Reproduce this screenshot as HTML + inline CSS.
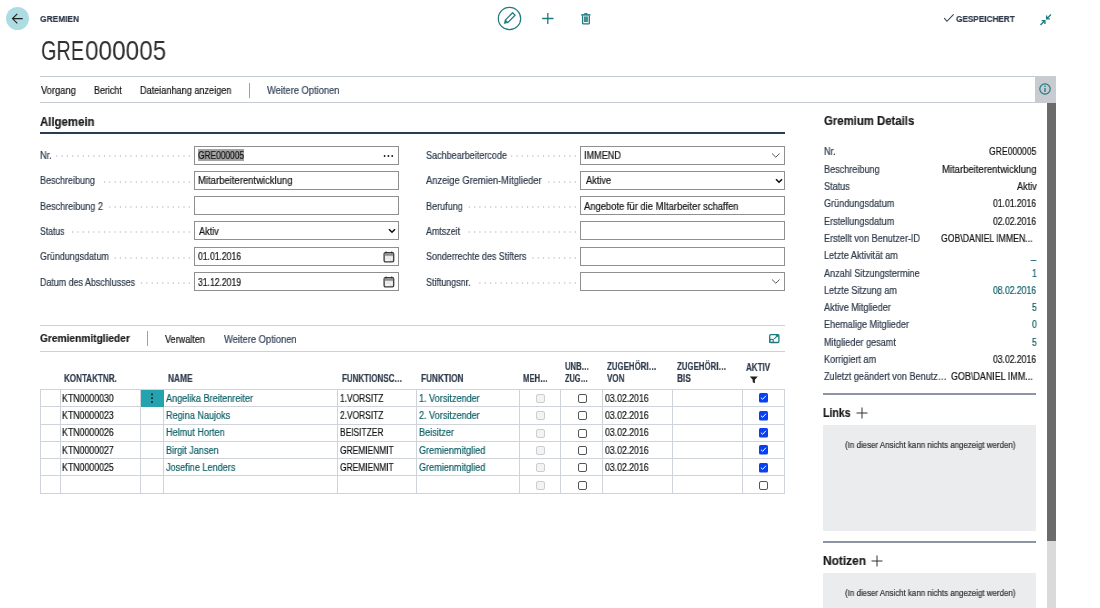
<!DOCTYPE html><html><head><meta charset="utf-8"><style>
*{margin:0;padding:0;box-sizing:border-box}
html,body{width:1100px;height:608px;overflow:hidden;background:#fff}
body{font-family:"Liberation Sans",sans-serif;color:#212121;position:relative}
.a{position:absolute;white-space:nowrap}
.t{position:absolute;white-space:nowrap;transform-origin:0 0;will-change:transform;-webkit-text-stroke:0.2px currentColor}
.inp{position:absolute;height:19px;border:1px solid #8f8f8f;background:#fff}
.dots{position:absolute;height:1.5px;background-image:linear-gradient(to right,transparent 4px,#c6cad0 4px);background-size:5.3px 1.5px;background-position:right top}
.vl{position:absolute;width:1px;background:#cfd3da}
.cb{position:absolute;width:9px;height:9px;border:1.2px solid #555;border-radius:2px;background:#fff}
.cbd{position:absolute;width:9px;height:9px;border:1px solid #cdcdcd;border-radius:2px;background:#f3f3f3}
.gbox{position:absolute;background:#ebecee}
</style></head><body>
<div class="a" style="left:6px;top:7px;width:23px;height:23px;border-radius:50%;background:#addde2"></div>
<svg class="a" style="left:6px;top:7px" width="23" height="23" viewBox="0 0 23 23"><path d="M6.5 11.6H16.7M11.3 6.8L6.5 11.6L11.3 16.4" fill="none" stroke="#1f1f1f" stroke-width="1.1"/></svg>
<div class="t" style="left:40.00px;top:13px;font-size:9.9px;line-height:11px;color:#2f3b4c;font-weight:bold;transform:scaleX(0.8483);">GREMIEN</div>
<div class="t" style="left:40.90px;top:35px;font-size:27.6px;line-height:31px;color:#303030;transform:scaleX(0.7191);-webkit-text-stroke:0;">GRE</div>
<div class="t" style="left:85.30px;top:35px;font-size:27.6px;line-height:31px;color:#303030;transform:scaleX(0.8819);-webkit-text-stroke:0;">000005</div>
<svg class="a" style="left:497px;top:6px" width="26" height="26" viewBox="0 0 26 26"><circle cx="12.5" cy="12.5" r="11.2" fill="none" stroke="#1d7a80" stroke-width="1.2"/><path d="M10.70 16.57L18.05 9.22L15.58 6.75L8.23 14.10Z" fill="none" stroke="#1d7a80" stroke-width="1.25" stroke-linejoin="round"/><path d="M7.20 17.60L10.70 16.57L8.23 14.10Z" fill="#1d7a80" stroke="#1d7a80" stroke-width="0.6" stroke-linejoin="round"/></svg>
<svg class="a" style="left:541px;top:12px" width="14" height="14" viewBox="0 0 14 14"><path d="M6.8 1V12M1.2 6.5H12.5" stroke="#1d7a80" stroke-width="1.3"/></svg>
<svg class="a" style="left:580px;top:11px" width="13" height="15" viewBox="0 0 13 15"><path d="M1.2 3.9H10.4" stroke="#1d7a80" stroke-width="1.5"/><path d="M3.9 3.5Q3.9 2.1 5.6 2.1H6.1Q7.7 2.1 7.7 3.5Z" fill="#1d7a80"/><path d="M2.6 4.4V12.2Q2.6 12.9 3.3 12.9H8.6Q9.3 12.9 9.3 12.2V4.4" fill="none" stroke="#1d7a80" stroke-width="1.3"/><rect x="4" y="5.4" width="3.9" height="5.6" fill="#1d7a80" fill-opacity="0.85"/></svg>
<svg class="a" style="left:943px;top:13px" width="12" height="10" viewBox="0 0 12 10"><path d="M1.2 5.2L4 8.3L10.6 1.4" fill="none" stroke="#3a4452" stroke-width="1.1"/></svg>
<div class="t" style="left:956.00px;top:13px;font-size:9.9px;line-height:11px;color:#2f3b4c;font-weight:bold;transform:scaleX(0.8305);">GESPEICHERT</div>
<svg class="a" style="left:1038px;top:12px" width="16" height="16" viewBox="0 0 16 16"><path d="M13 2.5L9 6.5M8.6 3.6V6.9H11.9" fill="none" stroke="#1d7a80" stroke-width="1.3"/><path d="M2.5 13L6.5 9M3.6 8.6H6.9V11.9" fill="none" stroke="#1d7a80" stroke-width="1.3"/></svg>
<div class="a" style="left:40px;top:76px;width:1016px;height:1px;background:#c6cbd3"></div>
<div class="a" style="left:40px;top:102px;width:995px;height:1px;background:#c6cbd3"></div>
<div class="t" style="left:40.70px;top:85px;font-size:10.0px;line-height:11px;color:#141414;transform:scaleX(0.9338);">Vorgang</div>
<div class="t" style="left:93.70px;top:85px;font-size:10.0px;line-height:11px;color:#141414;transform:scaleX(0.8932);">Bericht</div>
<div class="t" style="left:140.00px;top:85px;font-size:10.0px;line-height:11px;color:#141414;transform:scaleX(0.9131);">Dateianhang anzeigen</div>
<div class="a" style="left:249px;top:82.5px;width:1px;height:15px;background:#9aa1ab"></div>
<div class="t" style="left:267.00px;top:85px;font-size:10.0px;line-height:11px;color:#34425a;transform:scaleX(0.9325);">Weitere Optionen</div>
<div class="a" style="left:1035px;top:76px;width:21px;height:27px;background:#c8ccd1"></div>
<svg class="a" style="left:1038px;top:82px" width="14" height="14" viewBox="0 0 14 14"><circle cx="7" cy="7" r="5.2" fill="none" stroke="#1d7a80" stroke-width="1.2"/><path d="M7 6V10" stroke="#1d7a80" stroke-width="1.3"/><circle cx="7" cy="4.3" r="0.8" fill="#1d7a80"/></svg>
<div class="a" style="left:1047px;top:103px;width:9px;height:438px;background:#6b6b6b"></div>
<div class="a" style="left:1047px;top:541px;width:9px;height:67px;background:#dadada"></div>
<div class="t" style="left:40.20px;top:115px;font-size:12.2px;line-height:14px;color:#1c1c1c;font-weight:bold;transform:scaleX(0.9356);">Allgemein</div>
<div class="a" style="left:40px;top:132px;width:745px;height:2px;background:#2c3b52"></div>
<svg class="a" style="left:40px;top:154.30px" width="152" height="4" fill="#b9bec6"><circle cx="149.30" cy="2" r="0.75"/><circle cx="144.00" cy="2" r="0.75"/><circle cx="138.70" cy="2" r="0.75"/><circle cx="133.40" cy="2" r="0.75"/><circle cx="128.10" cy="2" r="0.75"/><circle cx="122.80" cy="2" r="0.75"/><circle cx="117.50" cy="2" r="0.75"/><circle cx="112.20" cy="2" r="0.75"/><circle cx="106.90" cy="2" r="0.75"/><circle cx="101.60" cy="2" r="0.75"/><circle cx="96.30" cy="2" r="0.75"/><circle cx="91.00" cy="2" r="0.75"/><circle cx="85.70" cy="2" r="0.75"/><circle cx="80.40" cy="2" r="0.75"/><circle cx="75.10" cy="2" r="0.75"/><circle cx="69.80" cy="2" r="0.75"/><circle cx="64.50" cy="2" r="0.75"/><circle cx="59.20" cy="2" r="0.75"/><circle cx="53.90" cy="2" r="0.75"/><circle cx="48.60" cy="2" r="0.75"/><circle cx="43.30" cy="2" r="0.75"/><circle cx="38.00" cy="2" r="0.75"/><circle cx="32.70" cy="2" r="0.75"/><circle cx="27.40" cy="2" r="0.75"/><circle cx="22.10" cy="2" r="0.75"/><circle cx="16.80" cy="2" r="0.75"/></svg>
<div class="t" style="left:40.00px;top:150px;font-size:10.0px;line-height:11px;color:#2e3a4a;transform:scaleX(0.9232);">Nr.</div>
<svg class="a" style="left:40px;top:179.70px" width="152" height="4" fill="#b9bec6"><circle cx="149.30" cy="2" r="0.75"/><circle cx="144.00" cy="2" r="0.75"/><circle cx="138.70" cy="2" r="0.75"/><circle cx="133.40" cy="2" r="0.75"/><circle cx="128.10" cy="2" r="0.75"/><circle cx="122.80" cy="2" r="0.75"/><circle cx="117.50" cy="2" r="0.75"/><circle cx="112.20" cy="2" r="0.75"/><circle cx="106.90" cy="2" r="0.75"/><circle cx="101.60" cy="2" r="0.75"/><circle cx="96.30" cy="2" r="0.75"/><circle cx="91.00" cy="2" r="0.75"/><circle cx="85.70" cy="2" r="0.75"/><circle cx="80.40" cy="2" r="0.75"/><circle cx="75.10" cy="2" r="0.75"/><circle cx="69.80" cy="2" r="0.75"/><circle cx="64.50" cy="2" r="0.75"/></svg>
<div class="t" style="left:40.00px;top:175px;font-size:10.0px;line-height:11px;color:#2e3a4a;transform:scaleX(0.8993);">Beschreibung</div>
<svg class="a" style="left:40px;top:205.00px" width="152" height="4" fill="#b9bec6"><circle cx="149.30" cy="2" r="0.75"/><circle cx="144.00" cy="2" r="0.75"/><circle cx="138.70" cy="2" r="0.75"/><circle cx="133.40" cy="2" r="0.75"/><circle cx="128.10" cy="2" r="0.75"/><circle cx="122.80" cy="2" r="0.75"/><circle cx="117.50" cy="2" r="0.75"/><circle cx="112.20" cy="2" r="0.75"/><circle cx="106.90" cy="2" r="0.75"/><circle cx="101.60" cy="2" r="0.75"/><circle cx="96.30" cy="2" r="0.75"/><circle cx="91.00" cy="2" r="0.75"/><circle cx="85.70" cy="2" r="0.75"/><circle cx="80.40" cy="2" r="0.75"/><circle cx="75.10" cy="2" r="0.75"/><circle cx="69.80" cy="2" r="0.75"/></svg>
<div class="t" style="left:40.00px;top:201px;font-size:10.0px;line-height:11px;color:#2e3a4a;transform:scaleX(0.9050);">Beschreibung 2</div>
<svg class="a" style="left:40px;top:230.00px" width="152" height="4" fill="#b9bec6"><circle cx="149.30" cy="2" r="0.75"/><circle cx="144.00" cy="2" r="0.75"/><circle cx="138.70" cy="2" r="0.75"/><circle cx="133.40" cy="2" r="0.75"/><circle cx="128.10" cy="2" r="0.75"/><circle cx="122.80" cy="2" r="0.75"/><circle cx="117.50" cy="2" r="0.75"/><circle cx="112.20" cy="2" r="0.75"/><circle cx="106.90" cy="2" r="0.75"/><circle cx="101.60" cy="2" r="0.75"/><circle cx="96.30" cy="2" r="0.75"/><circle cx="91.00" cy="2" r="0.75"/><circle cx="85.70" cy="2" r="0.75"/><circle cx="80.40" cy="2" r="0.75"/><circle cx="75.10" cy="2" r="0.75"/><circle cx="69.80" cy="2" r="0.75"/><circle cx="64.50" cy="2" r="0.75"/><circle cx="59.20" cy="2" r="0.75"/><circle cx="53.90" cy="2" r="0.75"/><circle cx="48.60" cy="2" r="0.75"/><circle cx="43.30" cy="2" r="0.75"/><circle cx="38.00" cy="2" r="0.75"/><circle cx="32.70" cy="2" r="0.75"/></svg>
<div class="t" style="left:40.00px;top:226px;font-size:10.0px;line-height:11px;color:#2e3a4a;transform:scaleX(0.8639);">Status</div>
<svg class="a" style="left:40px;top:255.70px" width="152" height="4" fill="#b9bec6"><circle cx="149.30" cy="2" r="0.75"/><circle cx="144.00" cy="2" r="0.75"/><circle cx="138.70" cy="2" r="0.75"/><circle cx="133.40" cy="2" r="0.75"/><circle cx="128.10" cy="2" r="0.75"/><circle cx="122.80" cy="2" r="0.75"/><circle cx="117.50" cy="2" r="0.75"/><circle cx="112.20" cy="2" r="0.75"/><circle cx="106.90" cy="2" r="0.75"/><circle cx="101.60" cy="2" r="0.75"/><circle cx="96.30" cy="2" r="0.75"/><circle cx="91.00" cy="2" r="0.75"/><circle cx="85.70" cy="2" r="0.75"/><circle cx="80.40" cy="2" r="0.75"/><circle cx="75.10" cy="2" r="0.75"/></svg>
<div class="t" style="left:40.00px;top:251px;font-size:10.0px;line-height:11px;color:#2e3a4a;transform:scaleX(0.8900);">Gründungsdatum</div>
<svg class="a" style="left:40px;top:280.90px" width="152" height="4" fill="#b9bec6"><circle cx="149.30" cy="2" r="0.75"/><circle cx="144.00" cy="2" r="0.75"/><circle cx="138.70" cy="2" r="0.75"/><circle cx="133.40" cy="2" r="0.75"/><circle cx="128.10" cy="2" r="0.75"/><circle cx="122.80" cy="2" r="0.75"/><circle cx="117.50" cy="2" r="0.75"/><circle cx="112.20" cy="2" r="0.75"/><circle cx="106.90" cy="2" r="0.75"/><circle cx="101.60" cy="2" r="0.75"/></svg>
<div class="t" style="left:40.00px;top:277px;font-size:10.0px;line-height:11px;color:#2e3a4a;transform:scaleX(0.8900);">Datum des Abschlusses</div>
<svg class="a" style="left:426px;top:154.30px" width="152" height="4" fill="#b9bec6"><circle cx="149.30" cy="2" r="0.75"/><circle cx="144.00" cy="2" r="0.75"/><circle cx="138.70" cy="2" r="0.75"/><circle cx="133.40" cy="2" r="0.75"/><circle cx="128.10" cy="2" r="0.75"/><circle cx="122.80" cy="2" r="0.75"/><circle cx="117.50" cy="2" r="0.75"/><circle cx="112.20" cy="2" r="0.75"/><circle cx="106.90" cy="2" r="0.75"/><circle cx="101.60" cy="2" r="0.75"/><circle cx="96.30" cy="2" r="0.75"/><circle cx="91.00" cy="2" r="0.75"/><circle cx="85.70" cy="2" r="0.75"/></svg>
<div class="t" style="left:426.00px;top:150px;font-size:10.0px;line-height:11px;color:#2e3a4a;transform:scaleX(0.9038);">Sachbearbeitercode</div>
<svg class="a" style="left:426px;top:179.70px" width="152" height="4" fill="#b9bec6"><circle cx="149.30" cy="2" r="0.75"/><circle cx="144.00" cy="2" r="0.75"/><circle cx="138.70" cy="2" r="0.75"/><circle cx="133.40" cy="2" r="0.75"/><circle cx="128.10" cy="2" r="0.75"/><circle cx="122.80" cy="2" r="0.75"/></svg>
<div class="t" style="left:426.00px;top:175px;font-size:10.0px;line-height:11px;color:#2e3a4a;transform:scaleX(0.9326);">Anzeige Gremien-Mitglieder</div>
<svg class="a" style="left:426px;top:205.00px" width="152" height="4" fill="#b9bec6"><circle cx="149.30" cy="2" r="0.75"/><circle cx="144.00" cy="2" r="0.75"/><circle cx="138.70" cy="2" r="0.75"/><circle cx="133.40" cy="2" r="0.75"/><circle cx="128.10" cy="2" r="0.75"/><circle cx="122.80" cy="2" r="0.75"/><circle cx="117.50" cy="2" r="0.75"/><circle cx="112.20" cy="2" r="0.75"/><circle cx="106.90" cy="2" r="0.75"/><circle cx="101.60" cy="2" r="0.75"/><circle cx="96.30" cy="2" r="0.75"/><circle cx="91.00" cy="2" r="0.75"/><circle cx="85.70" cy="2" r="0.75"/><circle cx="80.40" cy="2" r="0.75"/><circle cx="75.10" cy="2" r="0.75"/><circle cx="69.80" cy="2" r="0.75"/><circle cx="64.50" cy="2" r="0.75"/><circle cx="59.20" cy="2" r="0.75"/><circle cx="53.90" cy="2" r="0.75"/><circle cx="48.60" cy="2" r="0.75"/><circle cx="43.30" cy="2" r="0.75"/></svg>
<div class="t" style="left:426.00px;top:201px;font-size:10.0px;line-height:11px;color:#2e3a4a;transform:scaleX(0.9065);">Berufung</div>
<svg class="a" style="left:426px;top:230.00px" width="152" height="4" fill="#b9bec6"><circle cx="149.30" cy="2" r="0.75"/><circle cx="144.00" cy="2" r="0.75"/><circle cx="138.70" cy="2" r="0.75"/><circle cx="133.40" cy="2" r="0.75"/><circle cx="128.10" cy="2" r="0.75"/><circle cx="122.80" cy="2" r="0.75"/><circle cx="117.50" cy="2" r="0.75"/><circle cx="112.20" cy="2" r="0.75"/><circle cx="106.90" cy="2" r="0.75"/><circle cx="101.60" cy="2" r="0.75"/><circle cx="96.30" cy="2" r="0.75"/><circle cx="91.00" cy="2" r="0.75"/><circle cx="85.70" cy="2" r="0.75"/><circle cx="80.40" cy="2" r="0.75"/><circle cx="75.10" cy="2" r="0.75"/><circle cx="69.80" cy="2" r="0.75"/><circle cx="64.50" cy="2" r="0.75"/><circle cx="59.20" cy="2" r="0.75"/><circle cx="53.90" cy="2" r="0.75"/><circle cx="48.60" cy="2" r="0.75"/><circle cx="43.30" cy="2" r="0.75"/></svg>
<div class="t" style="left:426.00px;top:226px;font-size:10.0px;line-height:11px;color:#2e3a4a;transform:scaleX(0.8900);">Amtszeit</div>
<svg class="a" style="left:426px;top:255.70px" width="152" height="4" fill="#b9bec6"><circle cx="149.30" cy="2" r="0.75"/><circle cx="144.00" cy="2" r="0.75"/><circle cx="138.70" cy="2" r="0.75"/><circle cx="133.40" cy="2" r="0.75"/><circle cx="128.10" cy="2" r="0.75"/><circle cx="122.80" cy="2" r="0.75"/><circle cx="117.50" cy="2" r="0.75"/><circle cx="112.20" cy="2" r="0.75"/><circle cx="106.90" cy="2" r="0.75"/></svg>
<div class="t" style="left:426.00px;top:251px;font-size:10.0px;line-height:11px;color:#2e3a4a;transform:scaleX(0.8900);">Sonderrechte des Stifters</div>
<svg class="a" style="left:426px;top:280.90px" width="152" height="4" fill="#b9bec6"><circle cx="149.30" cy="2" r="0.75"/><circle cx="144.00" cy="2" r="0.75"/><circle cx="138.70" cy="2" r="0.75"/><circle cx="133.40" cy="2" r="0.75"/><circle cx="128.10" cy="2" r="0.75"/><circle cx="122.80" cy="2" r="0.75"/><circle cx="117.50" cy="2" r="0.75"/><circle cx="112.20" cy="2" r="0.75"/><circle cx="106.90" cy="2" r="0.75"/><circle cx="101.60" cy="2" r="0.75"/><circle cx="96.30" cy="2" r="0.75"/><circle cx="91.00" cy="2" r="0.75"/><circle cx="85.70" cy="2" r="0.75"/><circle cx="80.40" cy="2" r="0.75"/><circle cx="75.10" cy="2" r="0.75"/><circle cx="69.80" cy="2" r="0.75"/><circle cx="64.50" cy="2" r="0.75"/><circle cx="59.20" cy="2" r="0.75"/><circle cx="53.90" cy="2" r="0.75"/></svg>
<div class="t" style="left:426.00px;top:277px;font-size:10.0px;line-height:11px;color:#2e3a4a;transform:scaleX(0.8900);">Stiftungsnr.</div>
<div class="inp" style="left:194px;top:145.6px;width:205px"></div>
<div class="inp" style="left:580px;top:145.6px;width:205px"></div>
<div class="inp" style="left:194px;top:171px;width:205px"></div>
<div class="inp" style="left:580px;top:171px;width:205px"></div>
<div class="inp" style="left:194px;top:196.3px;width:205px"></div>
<div class="inp" style="left:580px;top:196.3px;width:205px"></div>
<div class="inp" style="left:194px;top:221.3px;width:205px"></div>
<div class="inp" style="left:580px;top:221.3px;width:205px"></div>
<div class="inp" style="left:194px;top:247px;width:205px"></div>
<div class="inp" style="left:580px;top:247px;width:205px"></div>
<div class="inp" style="left:194px;top:272.2px;width:205px"></div>
<div class="inp" style="left:580px;top:272.2px;width:205px"></div>
<div class="a" style="left:197.6px;top:148.6px;width:46.6px;height:12.3px;background:#a3a3a3"></div>
<div class="t" style="left:198.00px;top:150px;font-size:10.0px;line-height:11px;color:#141414;transform:scaleX(0.8357);">GRE000005</div>
<svg class="a" style="left:383px;top:153.6px" width="11" height="4" viewBox="0 0 11 4"><circle cx="1.6" cy="2" r="0.9" fill="#111"/><circle cx="5.4" cy="2" r="0.9" fill="#111"/><circle cx="9.2" cy="2" r="0.9" fill="#111"/></svg>
<div class="t" style="left:198.00px;top:175px;font-size:10.0px;line-height:11px;color:#141414;transform:scaleX(0.9508);">Mitarbeiterentwicklung</div>
<div class="t" style="left:199.00px;top:226px;font-size:10.0px;line-height:11px;color:#141414;transform:scaleX(0.9100);">Aktiv</div>
<div class="t" style="left:198.00px;top:251px;font-size:10.0px;line-height:11px;color:#141414;transform:scaleX(0.8600);">01.01.2016</div>
<div class="t" style="left:198.00px;top:277px;font-size:10.0px;line-height:11px;color:#141414;transform:scaleX(0.8600);">31.12.2019</div>
<svg class="a" style="left:388px;top:227.8px" width="8" height="6" viewBox="0 0 8 6"><path d="M1 1.2L4 4.2L7 1.2" fill="none" stroke="#111" stroke-width="1.6"/></svg>
<svg class="a" style="left:383px;top:251.2px" width="12" height="12" viewBox="0 0 12 12"><rect x="1.1" y="1.6" width="9.6" height="9.2" rx="1.3" fill="#dcdcdc" stroke="#3c3c3c" stroke-width="1.3"/><rect x="1.7" y="2.3" width="8.4" height="2.4" fill="#8c8c8c"/><rect x="2.3" y="5.4" width="2" height="1.6" fill="#fafafa"/><rect x="5" y="5.4" width="2" height="1.6" fill="#f0f0f0"/><rect x="7.6" y="5.4" width="1.9" height="3.6" fill="#f4f4f4"/><rect x="2.3" y="7.6" width="4.6" height="2.4" fill="#f4f4f4"/><circle cx="3.1" cy="1.4" r="0.9" fill="#2e2e2e"/><circle cx="8.7" cy="1.4" r="0.9" fill="#2e2e2e"/></svg>
<svg class="a" style="left:383px;top:276.4px" width="12" height="12" viewBox="0 0 12 12"><rect x="1.1" y="1.6" width="9.6" height="9.2" rx="1.3" fill="#dcdcdc" stroke="#3c3c3c" stroke-width="1.3"/><rect x="1.7" y="2.3" width="8.4" height="2.4" fill="#8c8c8c"/><rect x="2.3" y="5.4" width="2" height="1.6" fill="#fafafa"/><rect x="5" y="5.4" width="2" height="1.6" fill="#f0f0f0"/><rect x="7.6" y="5.4" width="1.9" height="3.6" fill="#f4f4f4"/><rect x="2.3" y="7.6" width="4.6" height="2.4" fill="#f4f4f4"/><circle cx="3.1" cy="1.4" r="0.9" fill="#2e2e2e"/><circle cx="8.7" cy="1.4" r="0.9" fill="#2e2e2e"/></svg>
<div class="t" style="left:584.00px;top:150px;font-size:10.0px;line-height:11px;color:#141414;transform:scaleX(0.9122);">IMMEND</div>
<svg class="a" style="left:771px;top:151.6px" width="10" height="7" viewBox="0 0 10 7"><path d="M1 1.5L4.8 5.2L8.6 1.5" fill="none" stroke="#444" stroke-width="0.9"/></svg>
<div class="t" style="left:585.60px;top:175px;font-size:10.0px;line-height:11px;color:#141414;transform:scaleX(0.9180);">Aktive</div>
<svg class="a" style="left:775px;top:177.5px" width="8" height="6" viewBox="0 0 8 6"><path d="M1 1.2L4 4.2L7 1.2" fill="none" stroke="#111" stroke-width="1.6"/></svg>
<div class="t" style="left:583.50px;top:201px;font-size:10.0px;line-height:11px;color:#141414;transform:scaleX(0.9399);">Angebote für die MItarbeiter schaffen</div>
<svg class="a" style="left:771px;top:278.2px" width="10" height="7" viewBox="0 0 10 7"><path d="M1 1.5L4.8 5.2L8.6 1.5" fill="none" stroke="#444" stroke-width="0.9"/></svg>
<div class="a" style="left:40px;top:325px;width:745px;height:1px;background:#cdd1d8"></div>
<div class="a" style="left:40px;top:351px;width:745px;height:1px;background:#cdd1d8"></div>
<div class="t" style="left:40.20px;top:332px;font-size:11px;line-height:12px;color:#1c1c1c;font-weight:bold;transform:scaleX(0.9238);">Gremienmitglieder</div>
<div class="a" style="left:147px;top:331px;width:1px;height:15px;background:#9aa1ab"></div>
<div class="t" style="left:165.20px;top:334px;font-size:10.0px;line-height:11px;color:#141414;transform:scaleX(0.9107);">Verwalten</div>
<div class="t" style="left:223.50px;top:334px;font-size:10.0px;line-height:11px;color:#34425a;transform:scaleX(0.9351);">Weitere Optionen</div>
<svg class="a" style="left:768px;top:333px" width="12" height="11" viewBox="0 0 12 11"><rect x="1.7" y="1.7" width="9.2" height="7.8" rx="1" fill="none" stroke="#1d7a80" stroke-width="1.3"/><rect x="1.9" y="6.4" width="3.3" height="3" fill="none" stroke="#1d7a80" stroke-width="1.1"/><path d="M6.2 5.8L9.4 2.6" fill="none" stroke="#1d7a80" stroke-width="1.1"/><path d="M10.6 1.4L7.4 1.9L10.1 4.6Z" fill="#1d7a80"/></svg>
<div class="a" style="left:40px;top:389px;width:745px;height:1px;background:#cfd3da"></div>
<div class="a" style="left:40px;top:406px;width:745px;height:1px;background:#cfd3da"></div>
<div class="a" style="left:40px;top:424px;width:745px;height:1px;background:#cfd3da"></div>
<div class="a" style="left:40px;top:441px;width:745px;height:1px;background:#cfd3da"></div>
<div class="a" style="left:40px;top:458px;width:745px;height:1px;background:#cfd3da"></div>
<div class="a" style="left:40px;top:475px;width:745px;height:1px;background:#cfd3da"></div>
<div class="a" style="left:40px;top:493px;width:745px;height:1px;background:#cfd3da"></div>
<div class="vl" style="left:40px;top:389px;height:105px"></div>
<div class="vl" style="left:60px;top:389px;height:105px"></div>
<div class="vl" style="left:140px;top:389px;height:105px"></div>
<div class="vl" style="left:163px;top:389px;height:105px"></div>
<div class="vl" style="left:337px;top:389px;height:105px"></div>
<div class="vl" style="left:416px;top:389px;height:105px"></div>
<div class="vl" style="left:519px;top:389px;height:105px"></div>
<div class="vl" style="left:560px;top:389px;height:105px"></div>
<div class="vl" style="left:602px;top:389px;height:105px"></div>
<div class="vl" style="left:672px;top:389px;height:105px"></div>
<div class="vl" style="left:742px;top:389px;height:105px"></div>
<div class="vl" style="left:784px;top:389px;height:105px"></div>
<div class="a" style="left:140.5px;top:389.5px;width:23px;height:17px;background:#24a2ae"></div>
<svg class="a" style="left:148px;top:392.2px" width="8" height="12" viewBox="0 0 8 12"><rect x="3.2" y="1.5" width="1.6" height="1.8" fill="#1a1a1a"/><rect x="3.2" y="5.3" width="1.6" height="1.8" fill="#1a1a1a"/><rect x="3.2" y="9.1" width="1.6" height="1.8" fill="#1a1a1a"/></svg>
<div class="t" style="left:64.30px;top:373px;font-size:10.2px;line-height:11px;color:#2f3b4c;font-weight:bold;transform:scaleX(0.7929);">KONTAKTNR.</div>
<div class="t" style="left:168.00px;top:373px;font-size:10.2px;line-height:11px;color:#2f3b4c;font-weight:bold;transform:scaleX(0.8167);">NAME</div>
<div class="t" style="left:341.50px;top:373px;font-size:10.2px;line-height:11px;color:#2f3b4c;font-weight:bold;transform:scaleX(0.7834);">FUNKTIONSC…</div>
<div class="t" style="left:420.70px;top:373px;font-size:10.2px;line-height:11px;color:#2f3b4c;font-weight:bold;transform:scaleX(0.8074);">FUNKTION</div>
<div class="t" style="left:522.90px;top:373px;font-size:10.2px;line-height:11px;color:#2f3b4c;font-weight:bold;transform:scaleX(0.7554);">MEH…</div>
<div class="t" style="left:564.80px;top:361px;font-size:10.2px;line-height:11px;color:#2f3b4c;font-weight:bold;transform:scaleX(0.7500);">UNB…</div>
<div class="t" style="left:564.80px;top:373px;font-size:10.2px;line-height:11px;color:#2f3b4c;font-weight:bold;transform:scaleX(0.7223);">ZUG…</div>
<div class="t" style="left:606.70px;top:361px;font-size:10.2px;line-height:11px;color:#2f3b4c;font-weight:bold;transform:scaleX(0.7738);">ZUGEHÖRI…</div>
<div class="t" style="left:606.70px;top:373px;font-size:10.2px;line-height:11px;color:#2f3b4c;font-weight:bold;transform:scaleX(0.7881);">VON</div>
<div class="t" style="left:676.60px;top:361px;font-size:10.2px;line-height:11px;color:#2f3b4c;font-weight:bold;transform:scaleX(0.7707);">ZUGEHÖRI…</div>
<div class="t" style="left:676.60px;top:373px;font-size:10.2px;line-height:11px;color:#2f3b4c;font-weight:bold;transform:scaleX(0.8125);">BIS</div>
<div class="t" style="left:746.30px;top:362px;font-size:10.2px;line-height:11px;color:#2f3b4c;font-weight:bold;transform:scaleX(0.7885);">AKTIV</div>
<svg class="a" style="left:748.5px;top:376px" width="10" height="8" viewBox="0 0 10 8"><path d="M0.8 0.5H8.8L5.9 3.8V7.2L3.7 6.2V3.8Z" fill="#1f1f1f"/></svg>
<div class="t" style="left:62.10px;top:393px;font-size:10.0px;line-height:11px;color:#141414;transform:scaleX(0.8789);">KTN0000030</div>
<div class="t" style="left:165.80px;top:393px;font-size:10.0px;line-height:11px;color:#0c5f66;transform:scaleX(0.9100);">Angelika Breitenreiter</div>
<div class="t" style="left:340.20px;top:393px;font-size:10.0px;line-height:11px;color:#141414;transform:scaleX(0.8400);">1.VORSITZ</div>
<div class="t" style="left:418.90px;top:393px;font-size:10.0px;line-height:11px;color:#0c5f66;transform:scaleX(0.9100);">1. Vorsitzender</div>
<div class="t" style="left:604.80px;top:393px;font-size:10.0px;line-height:11px;color:#141414;transform:scaleX(0.8709);">03.02.2016</div>
<div class="cbd" style="left:536px;top:393.87px"></div>
<div class="cb" style="left:578px;top:393.87px"></div>
<svg class="a" style="left:759px;top:393.37px" width="9" height="10" viewBox="0 0 9 10"><rect width="9" height="9.4" rx="1.5" fill="#0840f2"/><path d="M2.2 5L3.7 6.3L6.6 3.1" fill="none" stroke="#fff" stroke-width="1" stroke-linecap="round"/></svg>
<div class="t" style="left:62.10px;top:410px;font-size:10.0px;line-height:11px;color:#141414;transform:scaleX(0.8789);">KTN0000023</div>
<div class="t" style="left:165.80px;top:410px;font-size:10.0px;line-height:11px;color:#0c5f66;transform:scaleX(0.9100);">Regina Naujoks</div>
<div class="t" style="left:340.20px;top:410px;font-size:10.0px;line-height:11px;color:#141414;transform:scaleX(0.8400);">2.VORSITZ</div>
<div class="t" style="left:418.90px;top:410px;font-size:10.0px;line-height:11px;color:#0c5f66;transform:scaleX(0.9100);">2. Vorsitzender</div>
<div class="t" style="left:604.80px;top:410px;font-size:10.0px;line-height:11px;color:#141414;transform:scaleX(0.8709);">03.02.2016</div>
<div class="cbd" style="left:536px;top:411.19px"></div>
<div class="cb" style="left:578px;top:411.19px"></div>
<svg class="a" style="left:759px;top:410.69px" width="9" height="10" viewBox="0 0 9 10"><rect width="9" height="9.4" rx="1.5" fill="#0840f2"/><path d="M2.2 5L3.7 6.3L6.6 3.1" fill="none" stroke="#fff" stroke-width="1" stroke-linecap="round"/></svg>
<div class="t" style="left:62.10px;top:427px;font-size:10.0px;line-height:11px;color:#141414;transform:scaleX(0.8789);">KTN0000026</div>
<div class="t" style="left:165.80px;top:427px;font-size:10.0px;line-height:11px;color:#0c5f66;transform:scaleX(0.9100);">Helmut Horten</div>
<div class="t" style="left:340.20px;top:427px;font-size:10.0px;line-height:11px;color:#141414;transform:scaleX(0.8400);">BEISITZER</div>
<div class="t" style="left:418.90px;top:427px;font-size:10.0px;line-height:11px;color:#0c5f66;transform:scaleX(0.9100);">Beisitzer</div>
<div class="t" style="left:604.80px;top:427px;font-size:10.0px;line-height:11px;color:#141414;transform:scaleX(0.8709);">03.02.2016</div>
<div class="cbd" style="left:536px;top:428.53px"></div>
<div class="cb" style="left:578px;top:428.53px"></div>
<svg class="a" style="left:759px;top:428.03px" width="9" height="10" viewBox="0 0 9 10"><rect width="9" height="9.4" rx="1.5" fill="#0840f2"/><path d="M2.2 5L3.7 6.3L6.6 3.1" fill="none" stroke="#fff" stroke-width="1" stroke-linecap="round"/></svg>
<div class="t" style="left:62.10px;top:445px;font-size:10.0px;line-height:11px;color:#141414;transform:scaleX(0.8789);">KTN0000027</div>
<div class="t" style="left:165.80px;top:445px;font-size:10.0px;line-height:11px;color:#0c5f66;transform:scaleX(0.9100);">Birgit Jansen</div>
<div class="t" style="left:340.20px;top:445px;font-size:10.0px;line-height:11px;color:#141414;transform:scaleX(0.8400);">GREMIENMIT</div>
<div class="t" style="left:418.90px;top:445px;font-size:10.0px;line-height:11px;color:#0c5f66;transform:scaleX(0.9100);">Gremienmitglied</div>
<div class="t" style="left:604.80px;top:445px;font-size:10.0px;line-height:11px;color:#141414;transform:scaleX(0.8709);">03.02.2016</div>
<div class="cbd" style="left:536px;top:445.86px"></div>
<div class="cb" style="left:578px;top:445.86px"></div>
<svg class="a" style="left:759px;top:445.36px" width="9" height="10" viewBox="0 0 9 10"><rect width="9" height="9.4" rx="1.5" fill="#0840f2"/><path d="M2.2 5L3.7 6.3L6.6 3.1" fill="none" stroke="#fff" stroke-width="1" stroke-linecap="round"/></svg>
<div class="t" style="left:62.10px;top:462px;font-size:10.0px;line-height:11px;color:#141414;transform:scaleX(0.8789);">KTN0000025</div>
<div class="t" style="left:165.80px;top:462px;font-size:10.0px;line-height:11px;color:#0c5f66;transform:scaleX(0.9100);">Josefine Lenders</div>
<div class="t" style="left:340.20px;top:462px;font-size:10.0px;line-height:11px;color:#141414;transform:scaleX(0.8400);">GREMIENMIT</div>
<div class="t" style="left:418.90px;top:462px;font-size:10.0px;line-height:11px;color:#0c5f66;transform:scaleX(0.9100);">Gremienmitglied</div>
<div class="t" style="left:604.80px;top:462px;font-size:10.0px;line-height:11px;color:#141414;transform:scaleX(0.8709);">03.02.2016</div>
<div class="cbd" style="left:536px;top:463.19px"></div>
<div class="cb" style="left:578px;top:463.19px"></div>
<svg class="a" style="left:759px;top:462.69px" width="9" height="10" viewBox="0 0 9 10"><rect width="9" height="9.4" rx="1.5" fill="#0840f2"/><path d="M2.2 5L3.7 6.3L6.6 3.1" fill="none" stroke="#fff" stroke-width="1" stroke-linecap="round"/></svg>
<div class="cbd" style="left:536px;top:480.51px"></div>
<div class="cb" style="left:578px;top:480.51px"></div>
<div class="cb" style="left:759px;top:480.51px"></div>
<div class="t" style="left:823.70px;top:114px;font-size:12px;line-height:14px;color:#1c1c1c;font-weight:bold;transform:scaleX(0.9468);">Gremium Details</div>
<div class="t" style="left:823.50px;top:146px;font-size:10.0px;line-height:11px;color:#2e3a4a;transform:scaleX(0.9100);">Nr.</div>
<div class="t" style="left:989.16px;top:146px;font-size:10.0px;line-height:11px;color:#141414;transform:scaleX(0.8600);">GRE000005</div>
<div class="t" style="left:823.50px;top:164px;font-size:10.0px;line-height:11px;color:#2e3a4a;transform:scaleX(0.9100);">Beschreibung</div>
<div class="t" style="left:941.90px;top:164px;font-size:10.0px;line-height:11px;color:#141414;transform:scaleX(0.9508);">Mitarbeiterentwicklung</div>
<div class="t" style="left:823.50px;top:181px;font-size:10.0px;line-height:11px;color:#2e3a4a;transform:scaleX(0.9100);">Status</div>
<div class="t" style="left:1016.78px;top:181px;font-size:10.0px;line-height:11px;color:#141414;transform:scaleX(0.9100);">Aktiv</div>
<div class="t" style="left:823.50px;top:198px;font-size:10.0px;line-height:11px;color:#2e3a4a;transform:scaleX(0.9100);">Gründungsdatum</div>
<div class="t" style="left:993.45px;top:198px;font-size:10.0px;line-height:11px;color:#141414;transform:scaleX(0.8600);">01.01.2016</div>
<div class="t" style="left:823.50px;top:216px;font-size:10.0px;line-height:11px;color:#2e3a4a;transform:scaleX(0.9100);">Erstellungsdatum</div>
<div class="t" style="left:993.45px;top:216px;font-size:10.0px;line-height:11px;color:#141414;transform:scaleX(0.8600);">02.02.2016</div>
<div class="t" style="left:823.50px;top:233px;font-size:10.0px;line-height:11px;color:#2e3a4a;transform:scaleX(0.9100);">Erstellt von Benutzer-ID</div>
<div class="t" style="left:941.20px;top:233px;font-size:10.0px;line-height:11px;color:#141414;transform:scaleX(0.8697);">GOB\DANIEL IMMEN...</div>
<div class="t" style="left:823.50px;top:250px;font-size:10.0px;line-height:11px;color:#2e3a4a;transform:scaleX(0.9100);">Letzte Aktivität am</div>
<div class="t" style="left:1031.44px;top:250px;font-size:10.0px;line-height:11px;color:#0c5f66;transform:scaleX(0.9100);">_</div>
<div class="t" style="left:823.50px;top:268px;font-size:10.0px;line-height:11px;color:#2e3a4a;transform:scaleX(0.9100);">Anzahl Sitzungstermine</div>
<div class="t" style="left:1031.72px;top:268px;font-size:10.0px;line-height:11px;color:#0c5f66;transform:scaleX(0.8600);">1</div>
<div class="t" style="left:823.50px;top:285px;font-size:10.0px;line-height:11px;color:#2e3a4a;transform:scaleX(0.9100);">Letzte Sitzung am</div>
<div class="t" style="left:993.45px;top:285px;font-size:10.0px;line-height:11px;color:#0c5f66;transform:scaleX(0.8600);">08.02.2016</div>
<div class="t" style="left:823.50px;top:302px;font-size:10.0px;line-height:11px;color:#2e3a4a;transform:scaleX(0.9100);">Aktive Mitglieder</div>
<div class="t" style="left:1031.72px;top:302px;font-size:10.0px;line-height:11px;color:#0c5f66;transform:scaleX(0.8600);">5</div>
<div class="t" style="left:823.50px;top:319px;font-size:10.0px;line-height:11px;color:#2e3a4a;transform:scaleX(0.9100);">Ehemalige Mitglieder</div>
<div class="t" style="left:1031.72px;top:319px;font-size:10.0px;line-height:11px;color:#0c5f66;transform:scaleX(0.8600);">0</div>
<div class="t" style="left:823.50px;top:337px;font-size:10.0px;line-height:11px;color:#2e3a4a;transform:scaleX(0.9100);">Mitglieder gesamt</div>
<div class="t" style="left:1031.72px;top:337px;font-size:10.0px;line-height:11px;color:#0c5f66;transform:scaleX(0.8600);">5</div>
<div class="t" style="left:823.50px;top:354px;font-size:10.0px;line-height:11px;color:#2e3a4a;transform:scaleX(0.9100);">Korrigiert am</div>
<div class="t" style="left:993.45px;top:354px;font-size:10.0px;line-height:11px;color:#141414;transform:scaleX(0.8600);">03.02.2016</div>
<div class="t" style="left:823.50px;top:371px;font-size:10.0px;line-height:11px;color:#2e3a4a;transform:scaleX(0.9100);">Zuletzt geändert von Benutz…</div>
<div class="t" style="left:951.00px;top:371px;font-size:10.0px;line-height:11px;color:#141414;transform:scaleX(0.8947);">GOB\DANIEL IMM...</div>
<div class="a" style="left:823px;top:393px;width:213px;height:2px;background:#8c95a4"></div>
<div class="t" style="left:823.20px;top:406px;font-size:12.4px;line-height:14px;color:#1c1c1c;font-weight:bold;transform:scaleX(0.8525);">Links</div>
<svg class="a" style="left:856px;top:407px" width="12" height="12" viewBox="0 0 12 12"><path d="M6 0.5V11.5M0.5 6H11.5" stroke="#333" stroke-width="1"/></svg>
<div class="gbox" style="left:823px;top:425px;width:213px;height:106px"></div>
<div class="t" style="left:845.00px;top:440px;font-size:8.6px;line-height:10px;color:#333;transform:scaleX(0.9217);">(In dieser Ansicht kann nichts angezeigt werden)</div>
<div class="a" style="left:823px;top:541px;width:213px;height:1.5px;background:#8c95a4"></div>
<div class="t" style="left:823.20px;top:554px;font-size:12.4px;line-height:14px;color:#1c1c1c;font-weight:bold;transform:scaleX(0.9609);">Notizen</div>
<svg class="a" style="left:871px;top:555px" width="12" height="12" viewBox="0 0 12 12"><path d="M6 0.5V11.5M0.5 6H11.5" stroke="#333" stroke-width="1"/></svg>
<div class="gbox" style="left:823px;top:573px;width:213px;height:40px"></div>
<div class="t" style="left:845.00px;top:588px;font-size:8.6px;line-height:10px;color:#333;transform:scaleX(0.9217);">(In dieser Ansicht kann nichts angezeigt werden)</div>
</body></html>
